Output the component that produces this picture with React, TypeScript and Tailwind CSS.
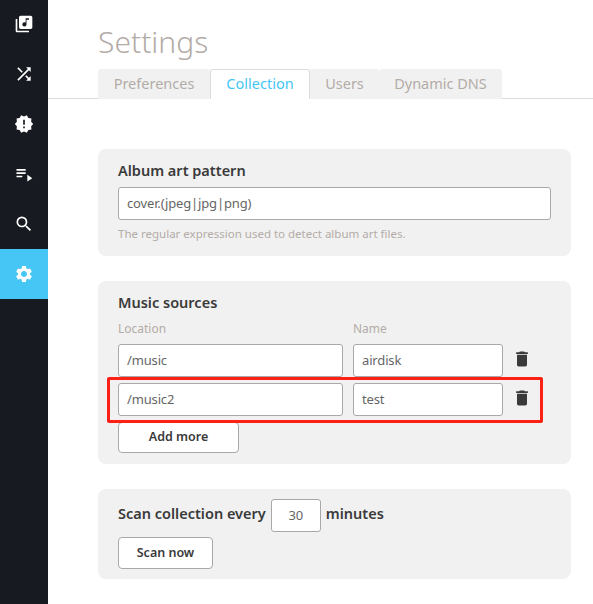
import { MdDelete, MdLibraryMusic, MdNewReleases, MdPlaylistPlay, MdSearch, MdSettings, MdShuffle } from "react-icons/md";

const navItems = [
  { id: "collection", Icon: MdLibraryMusic },
  { id: "shuffle", Icon: MdShuffle },
  { id: "releases", Icon: MdNewReleases },
  { id: "playlist", Icon: MdPlaylistPlay },
  { id: "search", Icon: MdSearch },
  { id: "settings", Icon: MdSettings, active: true },
];

const tabs = [
  { label: "Preferences", width: "w-[112px]" },
  { label: "Collection", width: "w-[100px]", active: true },
  { label: "Users", width: "w-[69px]" },
  { label: "Dynamic DNS", width: "w-[123px]" },
];

const inputClass =
  "h-[33px] rounded-[3px] border border-[#a8a8a8] bg-white px-[8px] pb-[2px] text-[13px] tracking-[-0.15px] text-[#666] outline-none";
const buttonClass =
  "rounded-[4px] border border-[#a8a8a8] bg-white text-[12.5px] font-semibold text-[#3a3a3a]";

function SourceRow({ location, name }: { location: string; name: string }) {
  return (
    <div className="flex items-center">
      <input readOnly value={location} className={`${inputClass} w-[225px]`} />
      <input readOnly value={name} className={`${inputClass} ml-[10px] w-[150px]`} />
      <MdDelete className="ml-[9px] mb-[4px] text-[#3a3a3a]" size={20} />
    </div>
  );
}

export default function App() {
  return (
    <div className="flex h-[604px] w-[593px] overflow-hidden bg-white font-['Noto_Sans','Open_Sans',sans-serif]">
      <nav className="w-[48px] shrink-0 bg-[#171a20]">
        <div className="-mt-px">
          {navItems.map(({ id, Icon, active }) => (
            <div
              key={id}
              className={`flex h-[50px] items-center justify-center text-white ${active ? "bg-[#45c6f4]" : ""}`}
            >
              <Icon size={20} />
            </div>
          ))}
        </div>
      </nav>

      <main className="relative min-w-0 flex-1">
        <h1 className="ml-[50px] mt-[21px] h-[48px] text-[30px] font-light leading-[42px] text-[#b3aca7]">Settings</h1>

        <div className="flex h-[30px] border-b border-[#dcdcdc] pl-[50px]">
          {tabs.map((tab) => (
            <div
              key={tab.label}
              className={`flex h-[30px] items-center justify-center rounded-t-[3px] pb-[1px] text-[14.5px] ${tab.width} ${
                tab.active
                  ? "border border-b-0 border-[#dcdcdc] bg-white text-[#45c6f4]"
                  : "bg-[#f1f1f1] text-[#b3aca7]"
              }`}
            >
              {tab.label}
            </div>
          ))}
        </div>

        <div className="ml-[50px] mt-[50px] flex w-[473px] flex-col gap-[25px]">
          <section className="h-[107px] rounded-[8px] bg-[#f1f1f1] px-[20px] pt-[10px]">
            <h2 className="text-[14.5px] font-semibold leading-[22px] text-[#3a3a3a]">Album art pattern</h2>
            <input readOnly value="cover.(jpeg|jpg|png)" className={`${inputClass} mt-[6px] w-[433px]`} />
            <p className="mt-[5px] text-[11.5px] leading-[18px] text-[#b3aca7]">
              The regular expression used to detect album art files.
            </p>
          </section>

          <section className="h-[183px] rounded-[8px] bg-[#f1f1f1] px-[20px] pt-[10px]">
            <h2 className="text-[14.5px] font-semibold leading-[22px] text-[#3a3a3a]">Music sources</h2>
            <div className="mt-[8px] flex text-[12px] leading-[16px] text-[#b3aca7]">
              <span className="w-[235px]">Location</span>
              <span>Name</span>
            </div>
            <div className="mt-[7px] flex flex-col gap-[6px]">
              <SourceRow location="/music" name="airdisk" />
              <SourceRow location="/music2" name="test" />
            </div>
            <button className={`${buttonClass} mt-[6px] h-[31px] w-[121px]`}>Add more</button>
          </section>

          <section className="h-[90px] rounded-[8px] bg-[#f1f1f1] px-[20px] pt-[10px]">
            <div className="flex items-center text-[14.5px] font-semibold text-[#3a3a3a]">
              <span className="pb-[4px]">Scan collection every</span>
              <input readOnly value="30" className={`${inputClass} mx-[5px] w-[50px] text-center font-normal`} />
              <span className="pb-[4px]">minutes</span>
            </div>
            <button className={`${buttonClass} mt-[5px] h-[32px] w-[95px]`}>Scan now</button>
          </section>
        </div>

        {/* red annotation around the second row */}
        <div className="absolute left-[59px] top-[377px] h-[46px] w-[436px] rounded-[2px] border-[3px] border-[#ff2015]" />
      </main>
    </div>
  );
}
